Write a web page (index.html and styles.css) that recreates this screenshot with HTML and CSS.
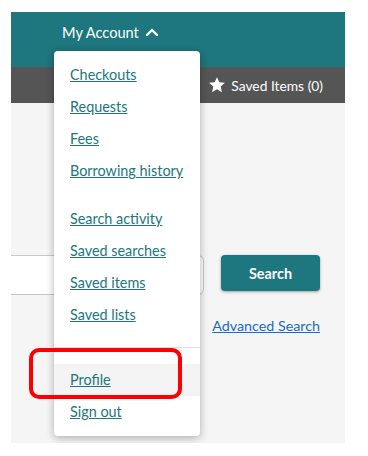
FILE: index.html
```html
<!DOCTYPE html>
<html lang="en">

<head>
    <title>My Account</title>
    <link rel="stylesheet" href="styles.css">
</head>

<body>
    <div class="frame">
        <div class="header">
            <div class="account">
                My Account
                <svg class="chevron" width="14" height="10" viewBox="0 0 14 10">
                    <path d="M2 8 L7 3 L12 8" fill="none" stroke="#fff" stroke-width="2.4" stroke-linecap="round" stroke-linejoin="round" />
                </svg>
            </div>
        </div>
        <div class="navbar">
            <div class="saved">
                <svg class="star" width="18" height="18" viewBox="0 0 24 24">
                    <path d="M12 1.5 L15.1 8.4 L22.6 9.1 L16.9 14.1 L18.6 21.5 L12 17.6 L5.4 21.5 L7.1 14.1 L1.4 9.1 L8.9 8.4 Z" fill="#fff" />
                </svg>
                Saved Items (0)
            </div>
        </div>
        <div class="main">
            <div class="searchRow">
                <input type="text" class="searchInput">
                <button type="button" class="searchBtn">Search</button>
            </div>
            <div class="advanced">
                <a href="#">Advanced Search</a>
            </div>
        </div>

        <div class="dropdown">
            <ul class="group">
                <li><a href="#">Checkouts</a></li>
                <li><a href="#">Requests</a></li>
                <li><a href="#">Fees</a></li>
                <li><a href="#">Borrowing history</a></li>
            </ul>
            <ul class="group groupLast">
                <li><a href="#">Search activity</a></li>
                <li><a href="#">Saved searches</a></li>
                <li><a href="#">Saved items</a></li>
                <li><a href="#">Saved lists</a></li>
            </ul>
            <ul class="group groupAccount">
                <li class="active"><a href="#">Profile</a></li>
                <li><a href="#">Sign out</a></li>
            </ul>
        </div>
        <div class="highlight"></div>
    </div>
</body>

</html>
```

FILE: styles.css
```css
body {
    margin: 0;
    background-color: #fff;
    font-family: Lato, 'Liberation Sans', sans-serif;
}

.frame {
    position: relative;
    width: 334px;
    height: 431px;
    margin: 12px 0 0 11px;
    display: flex;
    flex-direction: column;
}

.header {
    height: 55px;
    background-color: #1e767e;
    color: #fff;
}

.account {
    display: flex;
    align-items: center;
    gap: 6px;
    padding: 12px 0 0 51px;
    font-size: 14.6px;
}

.chevron {
    margin-top: -1px;
}

.navbar {
    height: 36px;
    background-color: #555;
    color: #fff;
    display: flex;
    justify-content: flex-end;
    align-items: center;
}

.saved {
    display: flex;
    align-items: center;
    gap: 5px;
    padding-right: 22px;
    font-size: 13.8px;
}

.main {
    flex: 1;
    background-color: #f5f5f5;
}

.searchRow {
    display: flex;
    align-items: flex-start;
    margin-top: 152px;
}

.searchInput {
    width: 193px;
    height: 40px;
    box-sizing: border-box;
    border: 1px solid #c8c8c8;
    border-left: none;
    border-radius: 0 6px 6px 0;
    background-color: #fff;
}

.searchBtn {
    width: 99px;
    height: 36px;
    margin-left: 17px;
    border: none;
    border-radius: 4px;
    background-color: #1e767e;
    color: #fff;
    font-family: Lato, 'Liberation Sans', sans-serif;
    font-weight: bold;
    font-size: 14.4px;
    box-shadow: 0 1px 3px rgba(0, 0, 0, 0.35);
}

.advanced {
    display: flex;
    justify-content: flex-end;
    padding: 22px 25px 0 0;
    font-size: 14.3px;
}

.advanced a {
    color: #1a6bc4;
}

.dropdown {
    position: absolute;
    left: 43px;
    top: 39px;
    width: 146px;
    padding: 8px 0;
    background-color: #fff;
    border-radius: 4px;
    box-shadow: 0 2px 8px rgba(0, 0, 0, 0.3);
}

.group {
    list-style: none;
    margin: 0;
    padding: 0 0 16px 0;
}

.groupLast {
    padding-bottom: 16px;
    border-bottom: 1px solid #e0e0e0;
}

.groupAccount {
    padding: 16px 0 0 0;
}

.group li {
    height: 32px;
    line-height: 32px;
    padding-left: 16px;
    font-size: 14.4px;
}

.group li.active {
    background-color: #f4f4f4;
}

.group a {
    color: #1e767e;
}

.highlight {
    position: absolute;
    left: 18px;
    top: 336px;
    width: 145px;
    height: 43px;
    border: 4px solid #ff0000;
    border-radius: 10px;
}
```
